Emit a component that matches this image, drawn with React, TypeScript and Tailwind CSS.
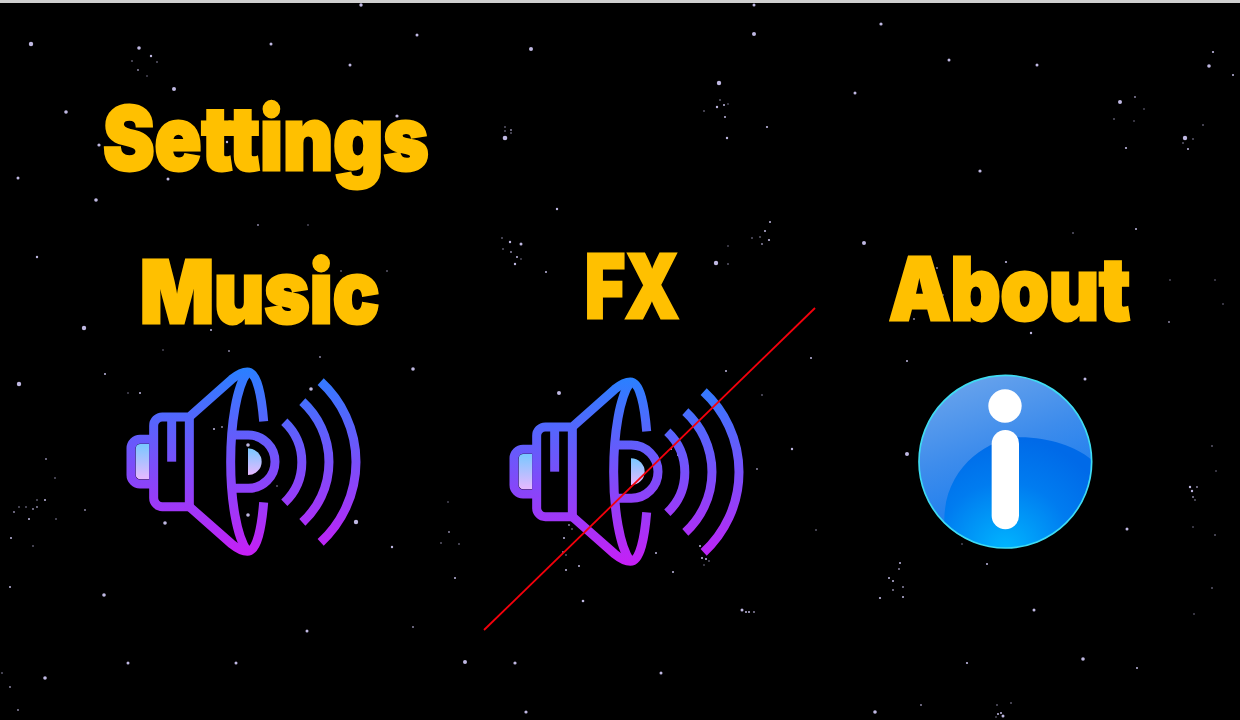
import React from 'react';

// x, y, radius
const stars: number[][] = [
  [31,44,2.2],[139,48,1.8],[151,56,1.2],[132,61,.8],[157,62,.8],[138,70,.9],[147,76,.7],[174,89,2],[66,112,1.8],[99,145,1.6],[227,142,1.2],[18,178,1.5],[168,179,1.5],[96,200,1.8],[37,257,1.2],[84,328,2.2],[211,330,1],[163,350,.7],[229,351,.9],[320,357,.9],[271,44,1.5],[350,65,1.5],[397,116,1.6],[361,5,1.7],[258,225,.9],[308,225,.7],[341,271,.8],[387,271,.8],
  [417,35,1.5],[531,49,2],[754,34,2],[719,83,2.2],[505,138,2.3],[505,127,.8],[505,131,.8],[511,130,.9],[511,133,.8],[704,111,.8],[720,100,.8],[717,107,1.2],[724,105,1],[728,104,.7],[725,117,1],[727,138,1.2],[767,127,1.1],[754,5,1.5],[557,209,1.2],[502,238,.8],[510,242,1.2],[521,244,1.5],[503,249,.8],[511,252,.9],[517,257,1],[515,264,1.2],[521,259,.7],[546,272,1],[770,222,1],[765,231,1],[752,238,.8],[760,237,.8],[769,240,1.1],[762,244,.9],[716,263,2.2],[728,264,.8],[728,246,.7],[811,358,1],
  [881,24,1.6],[949,60,1.5],[1037,65,1.5],[855,93,1.5],[1213,52,1.1],[1209,66,1.8],[1233,75,1],[1120,102,2],[1135,97,.9],[1144,109,.7],[1114,119,.8],[1134,121,.7],[1203,125,.8],[1185,138,2.2],[1193,139,.8],[1183,143,.8],[1188,149,1],[1126,148,1.1],[980,171,1.6],[864,243,2],[1073,233,.8],[1136,229,1],[1006,262,1.1],[937,268,.9],[943,295,.8],[914,319,.9],[1031,333,1.2],[1169,322,.9],[1215,280,.7],[1223,304,.7],[1170,280,.7],
  [19,384,2.2],[105,374,1],[140,393,1],[128,393,.7],[46,459,.9],[55,478,.8],[222,427,.9],[14,512,.9],[19,507,.8],[26,507,.8],[33,509,.9],[37,507,.9],[37,500,.8],[45,500,1],[29,519,1],[56,519,.8],[85,510,.9],[11,538,1],[33,546,.8],[10,587,1],[104,595,1.8],[165,523,1.8],[248,445,1.8],[214,429,1],[277,486,.8],[311,389,1.8],[248,515,1.8],[356,522,2.2],[392,547,1.2],[307,631,1.5],[128,663,1.5],[236,663,1.5],[2,673,.8],[45,678,1.8],[10,687,.9],[18,710,.9],[413,369,1.8],[413,627,.9],
  [559,393,2],[726,371,1],[762,395,.8],[792,449,1.2],[757,469,.9],[816,530,.8],[448,502,.7],[449,532,.9],[441,543,.8],[459,544,.8],[455,578,1],[569,525,.9],[572,529,.8],[564,538,1],[563,552,.9],[566,555,.8],[566,570,1],[579,566,1],[656,553,1],[673,572,1],[700,546,1],[706,559,1],[702,558,1],[709,561,.8],[704,565,.7],[583,601,1.3],[465,662,2],[515,663,1.6],[661,673,1.5],[526,712,1.6],[742,610,1.5],[746,612,1],[749,612,1],[754,612,.9],[671,449,1],[678,455,1],
  [907,361,1],[1085,379,1.5],[907,454,2],[1190,487,1.2],[1197,487,.9],[1192,491,1.2],[1193,497,.9],[1127,529,1.5],[987,564,1],[962,544,.7],[900,563,1],[899,569,.9],[889,578,1],[893,581,1],[893,590,.9],[903,587,.9],[880,598,1.1],[903,597,1],[1034,610,1.5],[967,663,1.1],[1083,659,1.8],[1137,668,1],[875,712,1.8],[921,705,.9],[1003,716,1.5],[1001,713,1],[998,714,1],[1011,703,.8],[997,705,.8],[996,717,.7],[1212,446,.8],[1216,471,.7],[1193,527,.7],[1212,588,.8],[1194,614,.7],[1215,535,.8],[1195,500,.8],
];

const Speaker = ({ id }: { id: string }) => (
  <svg viewBox="0 0 840 660" className="block w-[280px] h-[220px]" fill="none">
    <defs>
      <linearGradient id={id} gradientUnits="userSpaceOnUse" x1="0" y1="55" x2="0" y2="615">
        <stop offset="0" stopColor="#2a80ff" />
        <stop offset="1" stopColor="#c61ff5" />
      </linearGradient>
      <linearGradient id={id + '-f1'} gradientUnits="userSpaceOnUse" x1="0" y1="282" x2="0" y2="388">
        <stop offset="0" stopColor="#78c8ff" />
        <stop offset="1" stopColor="#e8b8ff" />
      </linearGradient>
      <linearGradient id={id + '-f2'} gradientUnits="userSpaceOnUse" x1="0" y1="295" x2="0" y2="375">
        <stop offset="0" stopColor="#78c8ff" />
        <stop offset="1" stopColor="#e8b8ff" />
      </linearGradient>
    </defs>
    <path d="M107 296 a14 14 0 0 1 14 -14 h27 v106 h-27 a14 14 0 0 1 -14 -14 z" fill={`url(#${id}-f1)`} />
    <path d="M444 295 a41 40 0 0 1 0 80 z" fill={`url(#${id}-f2)`} />
    <g stroke={`url(#${id})`} strokeWidth="27">
      <path d="M150 268 H120 a27 27 0 0 0 -27 27 V375 a27 27 0 0 0 27 27 H150" />
      <path d="M268 201 H187 a26 26 0 0 0 -26 26 V444 a26 26 0 0 0 26 26 H268 V201 L395 88 C415 72 430 66 442 66 C472 66 485 140 491 214" />
      <path d="M268 470 L395 582 C415 598 430 604 442 604 C472 604 485 530 491 457" />
      <path d="M442 66 C410 110 392 220 392 335 C392 450 410 560 442 604" />
      <path d="M215 212 V335" />
      <path d="M395 255 H445 a80 80 0 0 1 0 160 H395" />
      <path d="M553 215 A167 167 0 0 1 553 458" />
      <path d="M607 155 A245 245 0 0 1 607 517" />
      <path d="M662 95 A327 327 0 0 1 662 577" />
    </g>
  </svg>
);

const InfoIcon = () => (
  <svg viewBox="0 0 630 600" className="block w-[210px] h-[200px]">
    <defs>
      <linearGradient id="info-top" x1="0" y1="0" x2="0.35" y2="1">
        <stop offset="0" stopColor="#72a8ec" />
        <stop offset="0.5" stopColor="#3d8cec" />
        <stop offset="1" stopColor="#0f78f0" />
      </linearGradient>
      <radialGradient id="info-dome" gradientUnits="userSpaceOnUse" cx="316" cy="570" r="340">
        <stop offset="0" stopColor="#00b6ff" />
        <stop offset="0.6" stopColor="#007cf0" />
        <stop offset="1" stopColor="#006ae8" />
      </radialGradient>
    </defs>
    <circle cx="316" cy="305" r="259" fill="url(#info-top)" />
    <path d="M133 490 C128 320 270 232 360 232 C450 232 530 262 573 298 A259 259 0 0 1 133 490 Z" fill="url(#info-dome)" />
    <circle cx="316" cy="305" r="259" fill="none" stroke="#3fdcf2" strokeWidth="5" />
    <circle cx="315" cy="138" r="50" fill="#fff" />
    <rect x="275" y="210" width="82" height="298" rx="41" fill="#fff" />
  </svg>
);

const headingClass =
  "origin-left font-['Inter','Liberation_Sans',sans-serif] font-black text-[#ffc000] [-webkit-text-stroke:3px_#ffc000]";

export default function App() {
  return (
    <div className="relative w-full h-[720px] overflow-hidden bg-black border-t-[3px] border-[#cfcfcf]">
      <svg className="absolute left-0 top-[-3px] w-[1240px] h-[720px]" viewBox="0 0 1240 720">
        {stars.map(([x, y, r], i) => (
          <circle key={i} cx={x} cy={y} r={r} fill="#c9c2ee" opacity={r < 1 ? 0.75 : 0.95} />
        ))}
      </svg>

      <div className="relative pt-[84px]">
        <h1 className={`${headingClass} ml-[103px] h-[163px] text-[88px] leading-[102px] scale-x-[0.88]`}>Settings</h1>

        <div className="grid grid-cols-[383px_397px_1fr] ml-[100px]">
          <section>
            <h2 className={`${headingClass} ml-[40px] h-[100px] text-[86px] leading-[84px] scale-x-[0.9]`}>Music</h2>
            <Speaker id="music" />
          </section>
          <section>
            <h2 className={`${headingClass} ml-[102px] h-[110px] text-[88px] leading-[72px] scale-x-[0.78]`}>FX</h2>
            <Speaker id="fx" />
          </section>
          <section>
            <h2 className={`${headingClass} ml-[9px] h-[110px] text-[86px] leading-[78px] scale-x-[0.9]`}>About</h2>
            <div className="ml-[20px]">
              <InfoIcon />
            </div>
          </section>
        </div>
      </div>

      {/* FX is muted */}
      <svg className="absolute left-0 top-[-3px] w-[1240px] h-[720px]" viewBox="0 0 1240 720">
        <line x1="484" y1="630" x2="815" y2="308" stroke="#f5000c" strokeWidth="1.8" />
      </svg>
    </div>
  );
}
